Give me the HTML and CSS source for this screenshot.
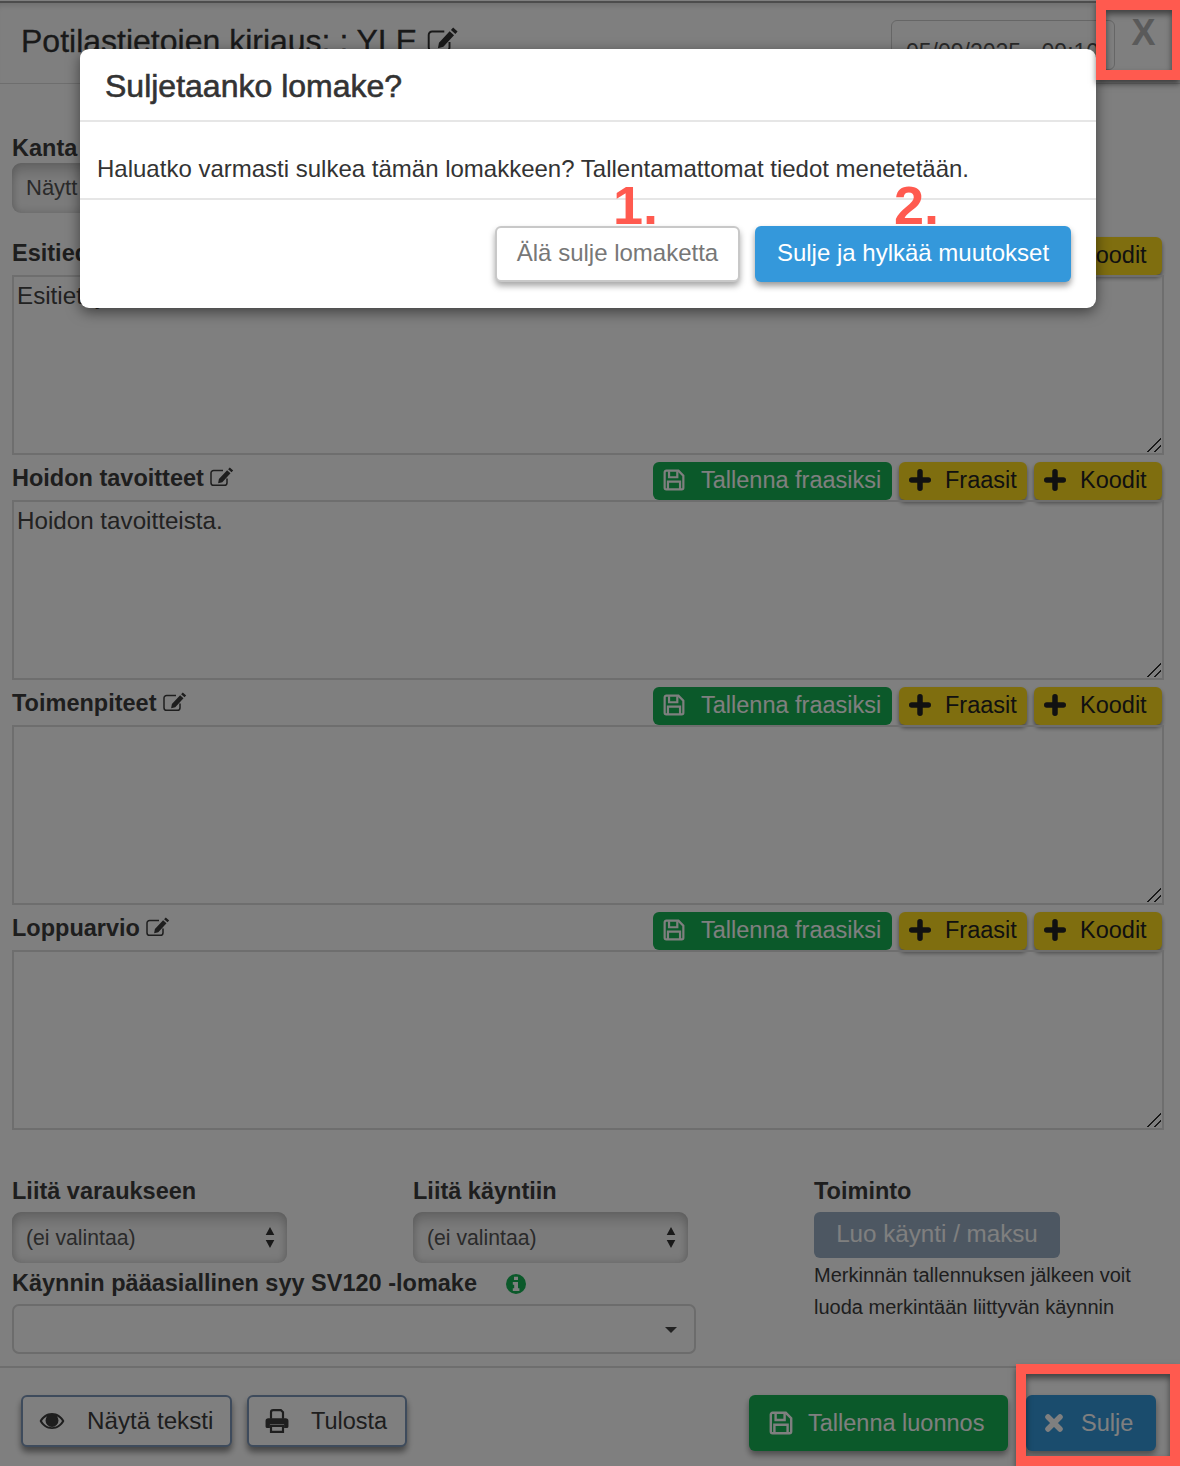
FILE: index.html
```html
<!DOCTYPE html>
<html lang="fi">
<head>
    <meta charset="UTF-8">
    <meta name="viewport" content="width=device-width, initial-scale=1.0">
    <title>Potilastietojen kirjaus</title>
    <link rel="stylesheet" href="styles.css">
</head>
<body>
    <!-- Shared icons -->
    <svg class="icon-defs" aria-hidden="true">
        <symbol id="i-edit" viewBox="0 0 24 20">
            <path d="M17 11.5v4.2a2.6 2.6 0 0 1-2.6 2.6H3.6A2.6 2.6 0 0 1 1 15.700V6.100a2.600 2.600 0 0 1 2.600-2.600h9.400" fill="none" stroke="currentColor" stroke-width="1.500"/>
            <path d="M19.800.4l3.400 3-1.700 1.900-3.400-3zM17.100 3.300l3.400 3-8.200 8.900-4.200 1.100.800-4.200z" fill="currentColor"/>
        </symbol>
        <symbol id="i-save" viewBox="0 0 20 20">
            <path d="M1.500 3a1.500 1.500 0 0 1 1.500-1.500h11l4.500 4.500v11a1.500 1.500 0 0 1-1.500 1.500H3A1.500 1.500 0 0 1 1.500 17z" fill="none" stroke="currentColor" stroke-width="2"/>
            <path d="M5.500 2v5.500h7.500V2M4.500 18.300v-6.800h11v6.800" fill="none" stroke="currentColor" stroke-width="2"/>
        </symbol>
        <symbol id="i-plus" viewBox="0 0 20 20">
            <path d="M10 2.500v15M2.500 10h15" fill="none" stroke="currentColor" stroke-width="5" stroke-linecap="round"/>
        </symbol>
        <symbol id="i-eye" viewBox="0 0 26 18">
            <path d="M13 1C7.500 1 3 4.500.6 9 3 13.500 7.500 17 13 17s10-3.500 12.400-8C23 4.500 18.500 1 13 1zm0 14.200C8.700 15.200 5 12.700 3 9c1.300-2.100 3-3.800 5.100-4.800A6.800 6.800 0 0 0 6.500 8.500a6.500 6.500 0 0 0 13 0 6.800 6.800 0 0 0-1.600-4.300c2.100 1 3.800 2.700 5.100 4.800-2 3.700-5.700 6.200-10 6.200z" fill="currentColor"/>
            <path d="M13 3.500a5 5 0 1 0 5 5 5 5 0 0 0-5-5z" fill="currentColor"/>
        </symbol>
        <symbol id="i-print" viewBox="0 0 22 22">
            <path d="M5.500 9V3a2 2 0 0 1 2-2h7l2 2v6" fill="none" stroke="currentColor" stroke-width="2"/>
            <path d="M3 8.500h16a2.500 2.500 0 0 1 2.500 2.500v5a1.500 1.500 0 0 1-1.500 1.500h-2.500V14h-13v3.500H2A1.500 1.500 0 0 1 .5 16v-5A2.500 2.500 0 0 1 3 8.500z" fill="currentColor"/>
            <path d="M5.500 15.500h11V21h-11z" fill="none" stroke="currentColor" stroke-width="2"/>
        </symbol>
        <symbol id="i-times" viewBox="0 0 20 20">
            <path d="M4 4l12 12M16 4L4 16" fill="none" stroke="currentColor" stroke-width="5.500" stroke-linecap="round"/>
        </symbol>
    </svg>

    <div class="window">
        <header class="window-head">
            <h2 class="window-title">Potilastietojen kirjaus: : YLE <svg class="title-icon"><use href="#i-edit"/></svg></h2>
            <div class="date-box">05/09/2025 - 09:10</div>
            <div class="close-x">X</div>
        </header>

        <main class="form">
            <div class="kanta">
                <div class="label">Kanta</div>
                <div class="select kanta-select">Näytt</div>
            </div>

            <section class="entry">
                <div class="entry-head">
                    <div class="label">Esitiedot <svg class="edit-icon"><use href="#i-edit"/></svg></div>
                    <div class="entry-actions">
                        <button class="btn btn-green"><svg class="btn-icon"><use href="#i-save"/></svg>Tallenna fraasiksi</button>
                        <button class="btn btn-yellow"><svg class="btn-icon"><use href="#i-plus"/></svg>Fraasit</button>
                        <button class="btn btn-yellow"><svg class="btn-icon"><use href="#i-plus"/></svg>Koodit</button>
                    </div>
                </div>
                <div class="text-box">Esitietoja.</div>
            </section>

            <section class="entry">
                <div class="entry-head">
                    <div class="label">Hoidon tavoitteet <svg class="edit-icon"><use href="#i-edit"/></svg></div>
                    <div class="entry-actions">
                        <button class="btn btn-green"><svg class="btn-icon"><use href="#i-save"/></svg>Tallenna fraasiksi</button>
                        <button class="btn btn-yellow"><svg class="btn-icon"><use href="#i-plus"/></svg>Fraasit</button>
                        <button class="btn btn-yellow"><svg class="btn-icon"><use href="#i-plus"/></svg>Koodit</button>
                    </div>
                </div>
                <div class="text-box">Hoidon tavoitteista.</div>
            </section>

            <section class="entry">
                <div class="entry-head">
                    <div class="label">Toimenpiteet <svg class="edit-icon"><use href="#i-edit"/></svg></div>
                    <div class="entry-actions">
                        <button class="btn btn-green"><svg class="btn-icon"><use href="#i-save"/></svg>Tallenna fraasiksi</button>
                        <button class="btn btn-yellow"><svg class="btn-icon"><use href="#i-plus"/></svg>Fraasit</button>
                        <button class="btn btn-yellow"><svg class="btn-icon"><use href="#i-plus"/></svg>Koodit</button>
                    </div>
                </div>
                <div class="text-box"></div>
            </section>

            <section class="entry">
                <div class="entry-head">
                    <div class="label">Loppuarvio <svg class="edit-icon"><use href="#i-edit"/></svg></div>
                    <div class="entry-actions">
                        <button class="btn btn-green"><svg class="btn-icon"><use href="#i-save"/></svg>Tallenna fraasiksi</button>
                        <button class="btn btn-yellow"><svg class="btn-icon"><use href="#i-plus"/></svg>Fraasit</button>
                        <button class="btn btn-yellow"><svg class="btn-icon"><use href="#i-plus"/></svg>Koodit</button>
                    </div>
                </div>
                <div class="text-box"></div>
            </section>

            <div class="links-grid">
                <div class="link-col">
                    <div class="label">Liitä varaukseen</div>
                    <div class="select">(ei valintaa)
                        <svg class="updown" viewBox="0 0 10 22"><path d="M5 0l4.500 8.500h-9zM5 22L.5 13.500h9z"/></svg>
                    </div>
                </div>
                <div class="link-col">
                    <div class="label">Liitä käyntiin</div>
                    <div class="select">(ei valintaa)
                        <svg class="updown" viewBox="0 0 10 22"><path d="M5 0l4.500 8.500h-9zM5 22L.5 13.500h9z"/></svg>
                    </div>
                </div>
                <div class="action-col">
                    <div class="label">Toiminto</div>
                    <button class="btn btn-muted">Luo käynti / maksu</button>
                    <p class="action-note">Merkinnän tallennuksen jälkeen voit luoda merkintään liittyvän käynnin</p>
                </div>
                <div class="reason-col">
                    <div class="label reason-label">Käynnin pääasiallinen syy SV120 -lomake
                        <svg class="info-icon" viewBox="0 0 20 20"><circle cx="10" cy="10" r="10" fill="currentColor"/><path d="M8 2.800h4v3.200H8zM6.800 8h5.200v6.200h1.400v2.800H6.800v-2.800h1.400v-3.400H6.800z" fill="#fff"/></svg>
                    </div>
                    <div class="combo"><span class="combo-arrow"></span></div>
                </div>
            </div>
        </main>

        <footer class="window-foot">
            <button class="btn btn-outline btn-show"><svg class="foot-icon eye"><use href="#i-eye"/></svg>Näytä teksti</button>
            <button class="btn btn-outline btn-print"><svg class="foot-icon"><use href="#i-print"/></svg>Tulosta</button>
            <button class="btn btn-big btn-green push-right"><svg class="foot-icon"><use href="#i-save"/></svg>Tallenna luonnos</button>
            <button class="btn btn-big btn-blue"><svg class="foot-icon small"><use href="#i-times"/></svg>Sulje</button>
        </footer>
    </div>

    <!-- Dimmed backdrop and confirm dialog -->
    <div class="backdrop"></div>
    <div class="modal">
        <div class="modal-head">Suljetaanko lomake?</div>
        <div class="modal-body">Haluatko varmasti sulkea tämän lomakkeen? Tallentamattomat tiedot menetetään.</div>
        <div class="modal-foot">
            <button class="btn modal-btn btn-white">Älä sulje lomaketta</button>
            <button class="btn modal-btn btn-blue">Sulje ja hylkää muutokset</button>
        </div>
    </div>

    <!-- Red annotations on top of the screenshot -->
    <div class="mark mark-x"></div>
    <div class="mark mark-close"></div>
    <div class="step step-1">1.</div>
    <div class="step step-2">2.</div>
</body>
</html>
```

FILE: styles.css
```css
* {
    box-sizing: border-box;
}

html, body {
    margin: 0;
    height: 1466px;
    overflow: hidden;
}

body {
    font-family: "Liberation Sans", Arial, sans-serif;
    background-color: #ffffff;
    color: #333333;
    position: relative;
}

.icon-defs {
    display: none;
}

.window {
    height: 1465px;
    margin-top: 1px;
    display: flex;
    flex-direction: column;
    border-top: 2px solid #9a9a9a;
}

/* Header */
.window-head {
    height: 81px;
    flex: none;
    display: flex;
    align-items: flex-start;
    padding: 17px 0 0 21px;
    border-bottom: 1px solid #dddddd;
    box-shadow: inset 0 6px 6px -4px rgba(0, 0, 0, 0.15);
}

.window-title {
    margin: 0;
    flex: 1;
    font-size: 32px;
    font-weight: normal;
    line-height: 42px;
    color: #333333;
    -webkit-text-stroke: 0.3px #333333;
    white-space: nowrap;
}

.title-icon {
    width: 32px;
    height: 26px;
    margin-left: 1px;
    vertical-align: -1px;
}

.date-box {
    width: 224px;
    height: 50px;
    padding: 18px 14px 0;
    border: 1px solid #cccccc;
    border-radius: 6px;
    font-size: 23px;
    color: #555555;
    white-space: nowrap;
    overflow: hidden;
}

.close-x {
    width: 65px;
    padding-right: 8px;
    text-align: center;
    margin-top: -8px;
    font-size: 36px;
    font-weight: bold;
    color: #b4b4b4;
}

/* Form */
.form {
    flex: none;
    padding: 49px 16px 0 12px;
}

.label {
    font-size: 23.5px;
    font-weight: bold;
    line-height: 30px;
    color: #3c3c3c;
    white-space: nowrap;
}

.kanta {
    height: 104px;
}

.select {
    position: relative;
    height: 51px;
    padding-left: 14px;
    line-height: 51px;
    font-size: 21.2px;
    color: #555555;
    border-radius: 9px;
    background-color: #f6f6f6;
    box-shadow: inset 0 0 8px rgba(0, 0, 0, 0.2), inset 0 10px 10px rgba(0, 0, 0, 0.12);
    width: 275px;
}

.kanta-select {
    height: 50px;
    line-height: 50px;
    font-size: 22px;
}

.updown {
    position: absolute;
    right: 12px;
    top: 15px;
    width: 10px;
    height: 21px;
    fill: #333333;
}

.entry {
    margin-bottom: 7px;
}

.entry-head {
    height: 38px;
    display: flex;
    justify-content: space-between;
}

.entry-head .label {
    padding-top: 1px;
}

.edit-icon {
    width: 24px;
    height: 20px;
    vertical-align: -1px;
    color: #3c3c3c;
}

.entry-actions {
    display: flex;
    gap: 7px;
    margin-right: 2px;
}

.text-box {
    position: relative;
    height: 180px;
    padding: 4px 3px;
    border: 2px solid #dcdcdc;
    font-size: 24.2px;
    line-height: 30px;
    color: #444444;
}

/* resize grip */
.text-box::after {
    content: "";
    position: absolute;
    right: 1px;
    bottom: 1px;
    width: 14px;
    height: 14px;
    background: linear-gradient(135deg, transparent 48%, #333333 48%, #333333 56%, transparent 56%, transparent 72%, #333333 72%, #333333 80%, transparent 80%);
}

/* Buttons */
.btn {
    display: inline-flex;
    align-items: center;
    height: 38px;
    padding: 0 10px 2px;
    border: none;
    border-radius: 6px;
    font-family: inherit;
    font-size: 23.5px;
    white-space: nowrap;
}

.btn-icon {
    flex: none;
    width: 22px;
    height: 22px;
    margin-right: 16px;
}

.btn-green {
    background-color: #17b254;
    color: #ffffff;
    width: 239px;
}

.btn-yellow {
    background-color: #ffdd1f;
    color: #222222;
    width: 128px;
    box-shadow: 0 3px 4px rgba(0, 0, 0, 0.45);
}

.btn-yellow .btn-icon {
    margin-right: 14px;
}

.btn-blue {
    background-color: #3498db;
    color: #ffffff;
    box-shadow: 0 4px 6px rgba(0, 0, 0, 0.4);
}

.btn-muted {
    width: 246px;
    height: 46px;
    justify-content: center;
    font-size: 24.2px;
    background-color: #9aaec4;
    color: #ffffff;
}

.btn-outline {
    height: 52px;
    padding: 0 16px;
    background-color: #ffffff;
    color: #3c3c3c;
    border: 2px solid #7c96b8;
    box-shadow: 0 5px 6px rgba(0, 0, 0, 0.45);
}

.btn-show {
    width: 211px;
    font-size: 24.2px;
}

.btn-print {
    width: 160px;
}

.btn-big {
    height: 56px;
    box-shadow: 0 4px 6px rgba(0, 0, 0, 0.4);
}

/* Bottom selects */
.links-grid {
    margin-top: 46px;
    display: grid;
    grid-template-columns: 401px 401px 1fr;
    grid-template-rows: 87px auto;
}

.link-col .label,
.action-col .label {
    height: 36px;
}

.action-col {
    grid-column: 3;
    grid-row: 1 / 3;
}

.action-note {
    margin: 1px 0 0;
    width: 330px;
    font-size: 20px;
    line-height: 32px;
    color: #3c3c3c;
}

.reason-col {
    grid-column: 1 / 3;
    grid-row: 2;
}

.reason-label {
    height: 41px;
    padding-top: 5px;
}

.info-icon {
    width: 20px;
    height: 20px;
    margin-left: 22px;
    vertical-align: -3px;
    color: #17b254;
}

.combo {
    position: relative;
    width: 684px;
    height: 50px;
    border: 2px solid #d8d8d8;
    border-radius: 7px;
}

.combo-arrow {
    position: absolute;
    right: 17px;
    top: 21px;
    border-left: 6px solid transparent;
    border-right: 6px solid transparent;
    border-top: 6px solid #444444;
}

/* Footer */
.window-foot {
    flex: 1;
    margin-top: 12px;
    display: flex;
    align-items: flex-start;
    gap: 15px;
    padding: 27px 24px 0 21px;
    border-top: 2px solid #dddddd;
}

.foot-icon {
    width: 24px;
    height: 24px;
    margin-right: 22px;
    flex: none;
}

.foot-icon.eye {
    width: 26px;
    height: 18px;
}

.foot-icon.small {
    width: 20px;
    height: 20px;
    margin-right: 17px;
}

.push-right {
    margin-left: auto;
    margin-right: 3px;
    width: 259px;
    padding: 0 20px;
}

.push-right .foot-icon {
    margin-right: 15px;
}

.window-foot .btn-blue {
    width: 130px;
    padding: 0 18px;
}

/* Backdrop and modal */
.backdrop {
    position: absolute;
    inset: 0;
    background-color: rgba(0, 0, 0, 0.5);
}

.modal {
    position: absolute;
    left: 80px;
    top: 49px;
    width: 1016px;
    height: 259px;
    background-color: #ffffff;
    border-radius: 9px;
    box-shadow: 0 4px 14px rgba(0, 0, 0, 0.5);
}

.modal-head {
    height: 73px;
    padding: 0 25px;
    line-height: 75px;
    font-size: 32px;
    color: #333333;
    -webkit-text-stroke: 0.6px #333333;
    border-bottom: 2px solid #e6e6e6;
}

.modal-body {
    height: 78px;
    padding: 32px 17px 0;
    font-size: 24px;
    line-height: 30px;
    color: #333333;
    border-bottom: 2px solid #e6e6e6;
}

.modal-foot {
    display: flex;
    justify-content: flex-end;
    gap: 15px;
    padding: 26px 25px 0;
}

.modal-btn {
    height: 56px;
    justify-content: center;
    font-size: 24px;
}

.btn-white {
    width: 245px;
    background-color: #ffffff;
    color: #777777;
    border: 2px solid #c8c8c8;
    box-shadow: 0 4px 6px rgba(0, 0, 0, 0.35);
}

.modal-btn.btn-blue {
    width: 316px;
}

/* Annotations */
.mark {
    position: absolute;
    border: 10px solid #ff5a4f;
    box-shadow: 0 4px 6px rgba(0, 0, 0, 0.5), inset 0 4px 6px rgba(0, 0, 0, 0.5);
}

.mark-x {
    left: 1096px;
    top: 0;
    width: 84px;
    height: 80px;
    border-right-width: 8px;
}

.mark-close {
    left: 1016px;
    top: 1364px;
    width: 164px;
    height: 102px;
}

.step {
    position: absolute;
    font-size: 54px;
    font-weight: bold;
    line-height: 54px;
    color: #ff5a4f;
}

.step-1 {
    left: 613px;
    top: 178px;
}

.step-2 {
    left: 894px;
    top: 178px;
}
```
